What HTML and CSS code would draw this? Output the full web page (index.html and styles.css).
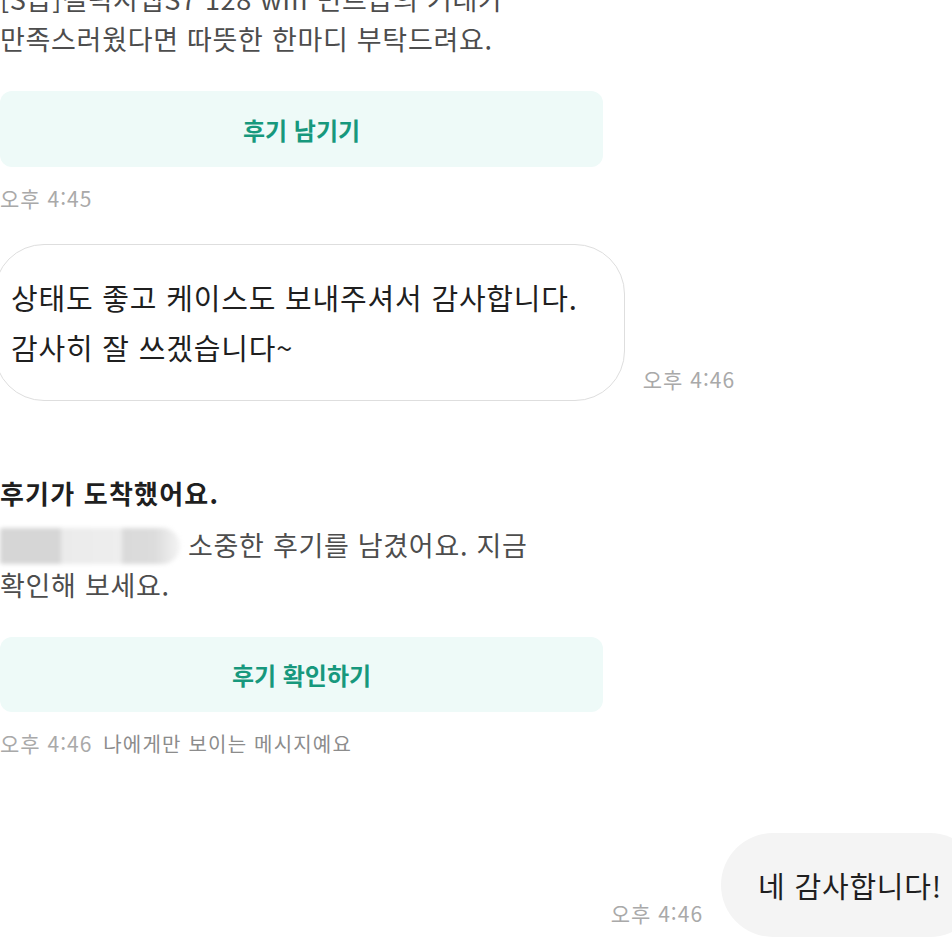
FILE: index.html
```html
<!DOCTYPE html>
<html lang="ko">
<head>
    <meta charset="UTF-8">
    <meta name="viewport" content="width=device-width, initial-scale=1.0">
    <title>채팅</title>
    <link rel="stylesheet" href="styles.css">
</head>
<body>
    <div class="chat">
        <!-- 거래 후기 요청 -->
        <div class="notice notice-first">
            <p class="notice-text">[S급]갤럭시탭S7 128 wifi 민트급의 거래가<br>만족스러웠다면 따뜻한 한마디 부탁드려요.</p>
            <button class="notice-btn">후기 남기기</button>
            <div class="time">오후 4:45</div>
        </div>

        <!-- 받은 메시지 -->
        <div class="row row-in">
            <div class="bubble bubble-in">상태도 좋고 케이스도 보내주셔서 감사합니다.<br>감사히 잘 쓰겠습니다~</div>
            <div class="time">오후 4:46</div>
        </div>

        <!-- 후기 도착 알림 -->
        <div class="notice notice-review">
            <h4 class="notice-title">후기가 도착했어요.</h4>
            <p class="notice-text"><span class="blur-name"></span>소중한 후기를 남겼어요. 지금<br>확인해 보세요.</p>
            <button class="notice-btn">후기 확인하기</button>
            <div class="time">오후 4:46 <span class="only-me">나에게만 보이는 메시지예요</span></div>
        </div>

        <!-- 보낸 메시지 -->
        <div class="row row-out">
            <div class="time">오후 4:46</div>
            <div class="bubble bubble-out">네 감사합니다!</div>
        </div>
    </div>
</body>
</html>
```

FILE: styles.css
```css
/* 페이지 */
body {
    margin: 0;
    background-color: #ffffff;
    font-family: "Noto Sans CJK KR", "Noto Sans", sans-serif;
    overflow: hidden;
    height: 952px;
}

.chat {
    display: flex;
    flex-direction: column;
}

/* 시스템 안내 블록 */
.notice {
    width: 603px;
}

.notice-first {
    margin-top: -21px;
}

.notice-text {
    margin: 0;
    font-size: 27px;
    line-height: 40px;
    letter-spacing: 0.7px;
    color: #4d4d4d;
    white-space: nowrap;
}

.notice-title {
    margin: 0 0 14px;
    font-size: 26px;
    line-height: 36px;
    letter-spacing: 1.2px;
    font-weight: 700;
    color: #1f1f1f;
}

.notice-btn {
    display: block;
    width: 100%;
    height: 76px;
    margin-top: 32px;
    border: none;
    border-radius: 12px;
    background-color: #eefaf8;
    color: #17987d;
    font-family: inherit;
    font-size: 24px;
    font-weight: 700;
}

.notice-review {
    margin-top: 74px;
}

.notice-review .notice-btn {
    height: 75px;
}

/* 이름 가림 처리 */
.blur-name {
    display: inline-block;
    width: 180px;
    height: 36px;
    margin-right: 8px;
    vertical-align: -8px;
    background: linear-gradient(90deg, #d6d6d6 0, #d6d6d6 34%, #ebebeb 34%, #eeeeee 68%, #dadada 68%, #dcdcdc 86%, #f4f4f4 100%);
    border-radius: 4px 40px 40px 4px;
    filter: blur(2px);
}

/* 시간 표시 */
.time {
    font-size: 21px;
    line-height: 28px;
    letter-spacing: 1px;
    color: #a9a9a9;
    white-space: nowrap;
}

.notice .time {
    margin-top: 17px;
}

.only-me {
    margin-left: 4px;
    font-size: 20px;
    letter-spacing: 1.2px;
    color: #8c8c8c;
}

/* 말풍선 */
.row {
    display: flex;
    align-items: flex-end;
    gap: 18px;
}

.row-in {
    margin-top: 32px;
    margin-left: -6px;
}

.row-in .time {
    margin-bottom: 8px;
}

.bubble {
    font-size: 29px;
    line-height: 50px;
    letter-spacing: 0.8px;
    color: #1f1f1f;
    white-space: nowrap;
}

.bubble-in {
    padding: 27px 46px 28px 16px;
    border: 1.5px solid #dedede;
    border-radius: 50px;
}

.row-out {
    justify-content: flex-end;
    margin-top: 75px;
    margin-right: -30px;
}

.row-out .time {
    margin-bottom: 10px;
}

.bubble-out {
    padding: 27px 40px 27px 37px;
    background-color: #f4f4f4;
    border-radius: 52px;
}
```
